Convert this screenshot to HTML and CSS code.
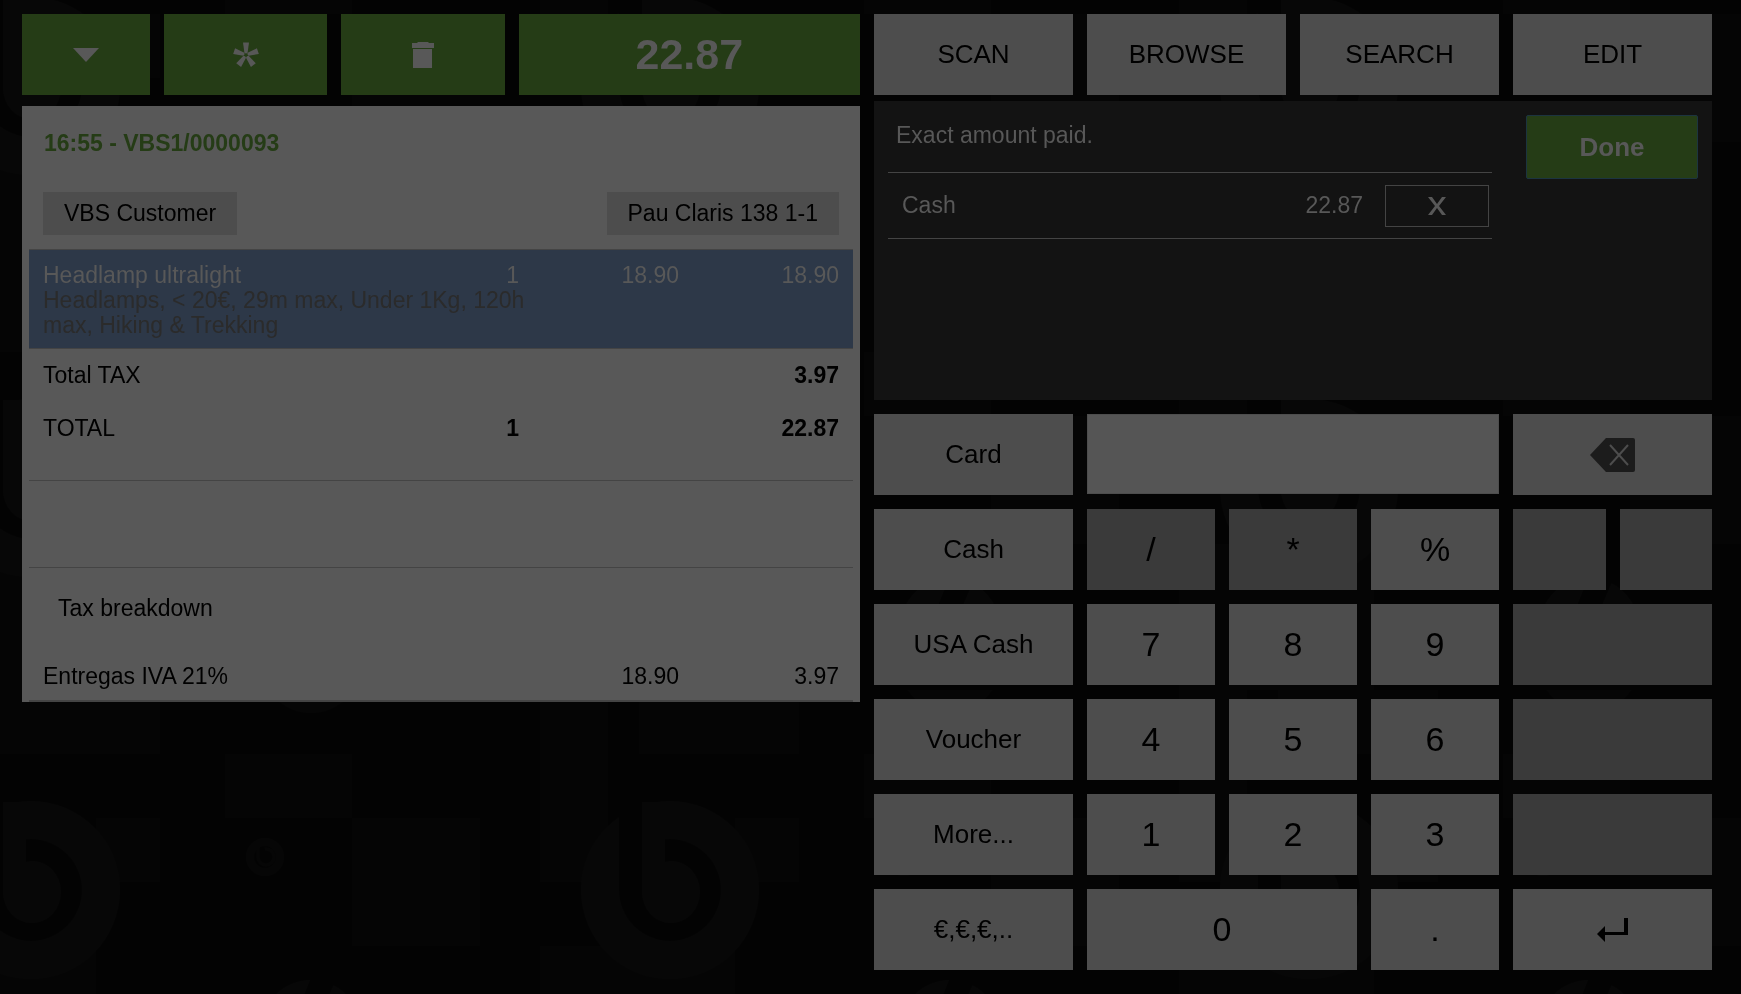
FILE: index.html
```
<!DOCTYPE html>
<html lang="en">
<head>
<meta charset="utf-8">
<title>Point of sale</title>
<link rel="stylesheet" href="styles.css">
</head>
<body>
<svg class="backdrop" aria-hidden="true">
  <defs>
    <g id="mark">
      <circle cx="31" cy="200" r="89" fill="#070707"/>
      <circle cx="31" cy="200" r="51" fill="#030303"/>
      <path fill="#070707" d="M3 112h23v60l5-1a29 31 0 1 1-28 30z"/>
      <path fill="#030303" d="M-20 112H3v89h-23z"/>
    </g>
    <pattern id="logos" width="639" height="402" patternUnits="userSpaceOnUse" x="0" y="690">
      <rect width="639" height="402" fill="#030303"/>
      <path fill="#050505" d="M0 0h160v64H0zM540 0h68v192h-68zM225 64h127v64H225zM96 128h64v64H96zM352 128h128v128H352zM0 256h96v146H0zM540 256h99v146h-99z"/>
      <use href="#mark"/>
      <use href="#mark" x="639"/>
      <circle cx="265" cy="167" r="15" fill="none" stroke="#060606" stroke-width="8"/>
      <path fill="none" stroke="#060606" stroke-width="3" d="M258 156v11a8 8 0 1 0 7-8"/>
      <circle cx="311" cy="340" r="50" fill="#070707"/>
      <circle cx="311" cy="-27" r="50" fill="#060606"/>
      <path fill="#030303" d="M314 280l-28 70h24l24-56z"/>
    </pattern>
  </defs>
  <rect width="100%" height="100%" fill="url(#logos)"/>
</svg>
<main class="pos">
  <section class="left" aria-label="Ticket">
    <div class="ticket-bar">
      <button class="key green" aria-label="Menu"><svg width="26" height="14" viewBox="0 0 26 14"><path d="M0 0h26L13 14z"/></svg></button>
      <button class="key green" aria-label="New ticket"><svg width="26" height="26" viewBox="-13 -13 26 26"><g id="petals"><path id="petal" d="M-3-12.5h6L1.600-2.200Q0-1 -1.600-2.200z"/><use href="#petal" transform="rotate(72)"/><use href="#petal" transform="rotate(144)"/><use href="#petal" transform="rotate(216)"/><use href="#petal" transform="rotate(288)"/></g></svg></button>
      <button class="key green" aria-label="Delete ticket"><svg width="22" height="26" viewBox="0 0 22 26"><path d="M0 1h5l1-1h10l1 1h5v5H0zM1 7h19v19H1z"/></svg></button>
      <button class="key green amount">22.87</button>
    </div>
    <div class="receipt">
      <h1 class="ticket-id">16:55 - VBS1/0000093</h1>
      <div class="customer">
        <button class="chip">VBS Customer</button>
        <button class="chip">Pau Claris 138 1-1</button>
      </div>
      <table class="lines">
        <colgroup><col><col class="qty"><col class="money"><col class="money"></colgroup>
        <tbody class="selected">
          <tr><td>Headlamp ultralight</td><td>1</td><td>18.90</td><td>18.90</td></tr>
          <tr class="detail"><td colspan="2">Headlamps, &lt; 20€, 29m max, Under 1Kg, 120h max, Hiking &amp; Trekking</td><td></td><td></td></tr>
        </tbody>
        <tbody class="totals">
          <tr><td>Total TAX</td><td></td><td></td><td><b>3.97</b></td></tr>
          <tr><td>TOTAL</td><td><b>1</b></td><td></td><td><b>22.87</b></td></tr>
        </tbody>
      </table>
      <div class="blank"></div>
      <h2 class="breakdown">Tax breakdown</h2>
      <table class="lines taxes">
        <colgroup><col><col class="qty"><col class="money"><col class="money"></colgroup>
        <tbody><tr><td>Entregas IVA 21%</td><td></td><td>18.90</td><td>3.97</td></tr></tbody>
      </table>
    </div>
  </section>
  <section class="right" aria-label="Payment">
    <nav class="tabs">
      <button class="key">SCAN</button>
      <button class="key">BROWSE</button>
      <button class="key">SEARCH</button>
      <button class="key">EDIT</button>
    </nav>
    <div class="payment">
      <div class="paid">
        <p class="status">Exact amount paid.</p>
        <div class="paid-line"><span class="method">Cash</span><span>22.87</span>
          <button class="remove" aria-label="Remove payment"><svg width="18" height="18" viewBox="0 0 18 18"><path d="M0 0h4l5 7 5-7h4l-7 9 7 9h-4l-5-7-5 7H0l7-9z"/></svg></button>
        </div>
      </div>
      <button class="done">Done</button>
    </div>
    <div class="pad">
      <div class="column">
        <button class="key">Card</button>
        <button class="key">Cash</button>
        <button class="key">USA Cash</button>
        <button class="key">Voucher</button>
        <button class="key">More...</button>
        <button class="key">€,€,€,..</button>
      </div>
      <div class="digits">
        <input class="entry" type="text" aria-label="Amount">
        <button class="key off">/</button><button class="key off">*</button><button class="key">%</button>
        <button class="key">7</button><button class="key">8</button><button class="key">9</button>
        <button class="key">4</button><button class="key">5</button><button class="key">6</button>
        <button class="key">1</button><button class="key">2</button><button class="key">3</button>
        <button class="key wide">0</button><button class="key">.</button>
      </div>
      <div class="column">
        <button class="key" aria-label="Backspace"><svg width="45" height="34" viewBox="0 0 45 34"><path fill="#1c1c1c" d="M16 0h27q2 0 2 2v30q0 2-2 2H16L0 17z"/><path fill="none" stroke="#4d4d4d" stroke-width="2" d="M20 7l18 20M38 7L20 27"/></svg></button>
        <div class="pair"><button class="key off" aria-label="Minus" disabled></button><button class="key off" aria-label="Plus" disabled></button></div>
        <button class="key off" aria-label="Quantity" disabled></button>
        <button class="key off" aria-label="Price" disabled></button>
        <button class="key off" aria-label="Discount" disabled></button>
        <button class="key" aria-label="Enter"><svg width="32" height="24" viewBox="0 0 32 24"><path d="M27 0h4v17H8v7L0 16l8-8v6h19z"/></svg></button>
      </div>
    </div>
  </section>
</main>
</body>
</html>
```

FILE: styles.css
```
* { box-sizing: border-box; }

body {
  margin: 0;
  min-height: 100vh;
  background: #030303;
  color: #000;
  font: 23px/25px "Liberation Sans", Arial, sans-serif;
}

button, input {
  margin: 0;
  padding: 0;
  border: 0;
  border-radius: 0;
  color: inherit;
  font: inherit;
}

svg { display: block; }

.backdrop {
  position: fixed;
  inset: 0;
  width: 100%;
  height: 100%;
}

.pos {
  position: relative;
  display: grid;
  grid-template-columns: 1fr 1fr;
  gap: 14px;
  align-items: start;
  padding: 14px 29px 24px 22px;
}

.key {
  display: flex;
  align-items: center;
  justify-content: center;
  min-width: 0;
  height: 81px;
  background: #4d4d4d;
  font-size: 26px;
}

.green {
  background: #253c16;
  color: #585858;
  fill: #585858;
}

.off { background: #3a3a3a; }

.ticket-bar {
  display: grid;
  grid-template-columns: 128fr 163fr 163fr 341fr;
  gap: 14px;
}

.amount {
  font-size: 43px;
  font-weight: bold;
}

.receipt {
  margin-top: 11px;
  padding: 0 7px;
  background: #585858;
}

.ticket-id {
  margin: 0;
  padding: 25px 15px 36px;
  color: #253c16;
  font-size: 23px;
  line-height: 25px;
}

.customer {
  display: flex;
  justify-content: space-between;
  padding: 0 14px 14px;
}

.chip {
  height: 43px;
  padding: 0 21px;
  background: #4d4d4d;
}

.lines {
  width: 100%;
  table-layout: fixed;
  border-collapse: collapse;
}

.qty { width: 100px; }
.money { width: 160px; }

.lines td {
  padding: 0 14px 0 0;
  text-align: right;
  vertical-align: top;
}

.lines td:first-child {
  padding-left: 14px;
  text-align: left;
}

.selected {
  border-top: 1px solid #444;
  border-bottom: 1px solid #444;
  background: #2d3848;
  color: #585858;
}

.selected tr:first-child td { padding-top: 13px; }
.selected .detail td { padding-right: 0; padding-bottom: 10px; }
.detail { color: #2b2b2b; }

.totals { border-bottom: 1px solid #444; }
.totals td { padding-top: 14px; padding-bottom: 14px; }
.totals tr:last-child td { padding-bottom: 39px; }

.blank {
  height: 87px;
  border-bottom: 1px solid #444;
}

.breakdown {
  margin: 0;
  padding: 28px 29px 29px;
  font-size: 23px;
  font-weight: normal;
  line-height: 25px;
}

.taxes { border-bottom: 2px solid #444; }
.taxes td { padding-top: 14px; padding-bottom: 11px; }

.tabs {
  display: grid;
  grid-template-columns: repeat(4, 1fr);
  gap: 14px;
}

.payment {
  display: flex;
  gap: 34px;
  align-items: flex-start;
  min-height: 299px;
  margin: 6px 0 14px;
  padding: 14px;
  background: #131313;
  color: #585858;
}

.paid { flex: 1; }

.status {
  margin: 0;
  padding: 8px 8px 24px;
  border-bottom: 1px solid #444;
}

.paid-line {
  display: flex;
  align-items: flex-start;
  padding: 12px 3px 11px 14px;
  border-bottom: 1px solid #444;
  line-height: 40px;
}

.method { flex: 1; }

.remove {
  display: flex;
  align-items: center;
  justify-content: center;
  width: 104px;
  height: 42px;
  margin-left: 22px;
  border: 1px solid #444;
  background: none;
  fill: #585858;
}

.done {
  width: 172px;
  height: 64px;
  border: 1px solid #1c3440;
  border-radius: 2px;
  background: #253c16;
  font-size: 26px;
  font-weight: bold;
}

.pad {
  display: grid;
  grid-template-columns: 199fr 412fr 199fr;
  gap: 14px;
}

.column {
  display: grid;
  gap: 14px;
}

.digits {
  display: grid;
  grid-template-columns: repeat(3, 1fr);
  gap: 14px;
}

.digits .key { font-size: 34px; }

.entry {
  grid-column: 1 / -1;
  width: 100%;
  height: 80px;
  margin-bottom: 1px;
  padding: 0 14px;
  border: 1px solid #4d4d4d;
  background: #555;
}

.wide { grid-column: span 2; }

.pair {
  display: grid;
  grid-template-columns: 1fr 1fr;
  gap: 14px;
}
```
